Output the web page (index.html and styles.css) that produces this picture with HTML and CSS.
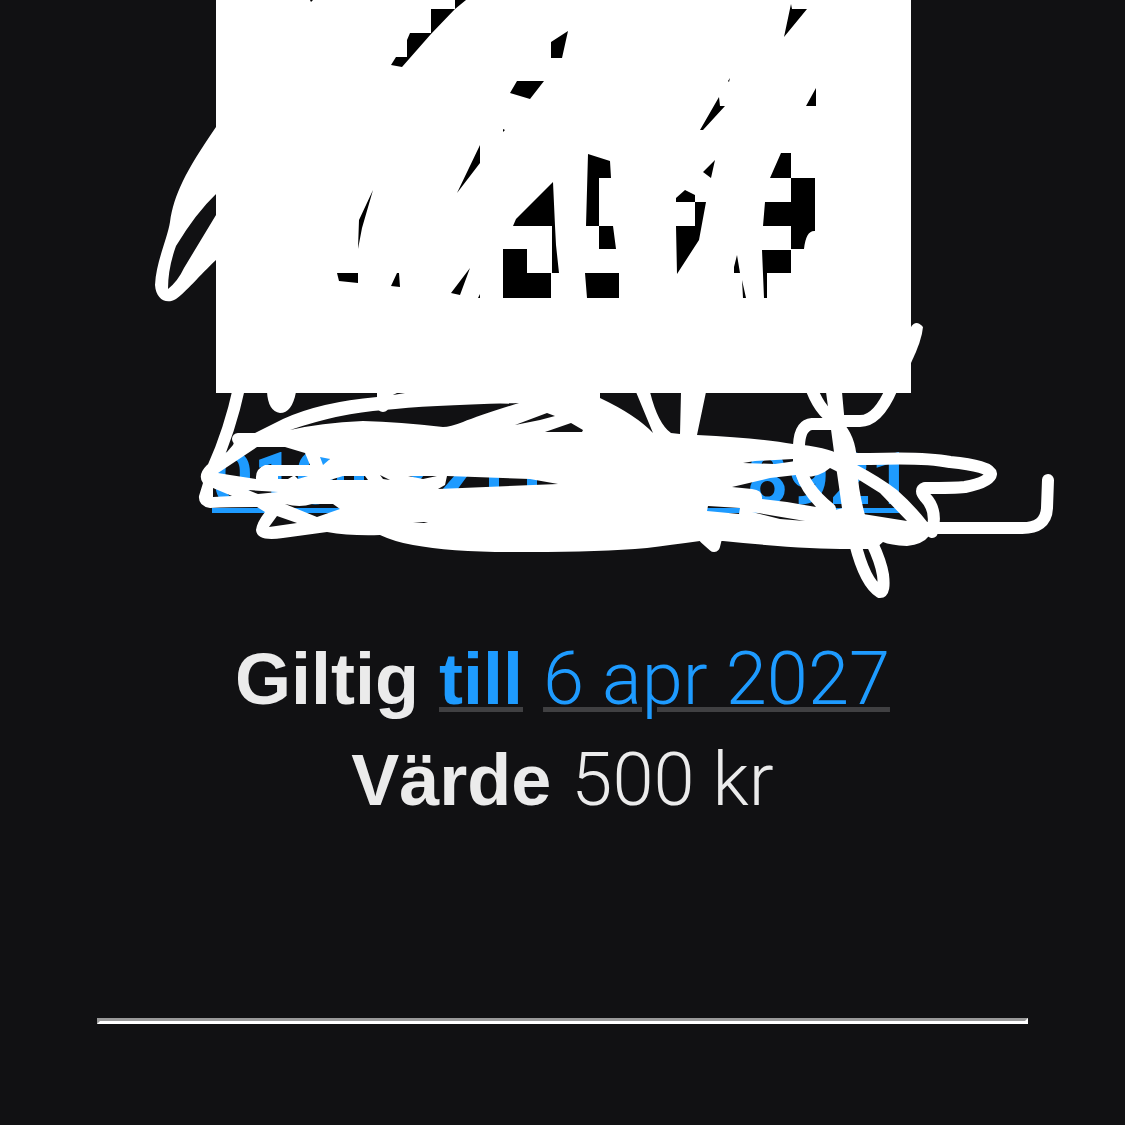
FILE: index.html
```
<!DOCTYPE html>
<html lang="sv">
<head>
    <meta charset="UTF-8">
    <meta name="viewport" content="width=device-width, initial-scale=1.0">
    <title>Presentkort</title>
    <link rel="stylesheet" href="styles.css">
</head>
<body>
    <main class="voucher">
        <div class="code-panel">
            <svg class="code" viewBox="216 0 695 393" aria-hidden="true">
                <path d="M455 0V9H431V33H410L407 40V57H396L391 65L402 67L431 34L455 9L466 0Z"/>
                <path d="M480 145V163L457 193ZM373 190L359 220L358 249L362 228ZM337 273H358V283L339 281ZM397 273H399L400 287L391 286ZM470 268L460 295L451 293ZM480 294V298H478ZM310 0H313L311 2Z"/>
                <path d="M568 31L551 42V58H562ZM517 81H544L530 99L510 93ZM791 4L792 9H807L784 37ZM719 97L720 106H725L703 130H700ZM816 88V106H806ZM730 78L729 82L728 81ZM503 129L505 130L503 132Z"/>
                <path d="M588 154L610 161L611 178H599V226H586ZM599 226H613L616 249H599Z"/>
                <path d="M553 182L555 226L556 245L559 273H552V226H513L516 219ZM503 249H527V273H551V298H503ZM585 273H619V298H587Z"/>
                <path d="M715 160L711 178L703 172ZM676 198L685 190L695 195V202H676ZM695 202H706L699 240L677 274L676 226H695Z"/>
                <path d="M781 153H791V178H815V231Q806 230 804 249H791V273H767V298H764L762 250H791V226H763L765 202H791V178H770ZM737 255L740 273H734V267ZM742 280L746 298H743Z"/>
            </svg>
        </div>

        <a class="number" href="#"><span>010</span><span>8921</span></a>

        <p class="row"><strong>Giltig</strong> <a href="#"><strong>till</strong></a> <a class="light" href="#">6 apr 2027</a></p>
        <p class="row"><strong>Värde</strong> <span class="light">500 kr</span></p>
        <hr>

        <svg class="scribble" viewBox="0 0 1125 620" aria-hidden="true">
            <!-- bits of digits in the middle of the number -->
            <path class="ink" d="M455 475H468L457 490H442ZM489 475H499V490H489ZM527 475H537V490H527ZM338 475H344V482H336ZM354 475H364V482H354ZM408 475H424L420 480Z"/>

            <path class="fill" d="M216 127C185 172 174 195 170 222C167 240 156 262 155 285C156 299 166 305 176 299C185 293 200 275 216 260ZM216 194Q196 213 176 246Q168 268 168 289Q178 281 184 268L216 215Z"/>
            <path class="fill" d="M911 327Q916 319 923 327Q922 340 911 363Z"/>
            <path class="fill" d="M267 392H296Q292 413 280 413Q268 411 267 392Z"/>

            <path class="fill" d="M238 433H255L283 419Q320 402 377 397V392H600V398Q636 415 653 433L636 392H650Q658 424 671 433L680 434L681 392H706L697 435Q760 438 793 444Q828 447 840 455L857 465Q880 477 897 490Q914 505 928 523V537Q923 544 907 546Q890 545 883 542L875 549H850Q800 549 723 541L700 541Q670 545 647 548Q600 552 530 552Q455 553 413 545Q395 542 380 535Q350 536 327 532L283 538Q257 542 256 530Q257 522 265 512L257 507Q230 507 210 508Q198 506 199 496L203 483Q197 475 207 465L227 452L233 445Z
                M290 430Q340 413 384 410Q430 405 519 403Q480 415 463 422Q450 427 443 427Q400 422 363 421Q320 423 290 430Z
                M515 425L547 413L555 416L540 420ZM545 432L571 423L583 430L582 432ZM393 395L397 393H405Z
                M218 473L257 447H285L305 453L310 465H265Q255 469 256 479L230 475ZM213 488L232 496L213 497ZM285 504Q300 508 312 504H333L340 509L317 517ZM269 527L277 516L297 523ZM320 457L330 459L323 465ZM248 490L278 492L258 494ZM278 476H293L288 479H278ZM295 476H308L298 479ZM330 480L343 476H365L368 480ZM380 475L390 480L383 479ZM408 476H437L423 479ZM447 476L530 479L558 484L438 489L445 485ZM413 522L428 522L424 523Z
                M743 463L755 461L793 459L796 461L775 464ZM732 487L770 478L796 475Q800 490 816 507L787 502L762 499Q763 490 752 489ZM708 506L740 508L739 514L707 511ZM752 512L805 521L780 519Z
                M804 477Q820 477 830 468L838 472L843 508L835 510L813 493ZM856 478L880 493L907 521L863 514Z"/>

            <path class="fill" d="M826 392H842L845 425Q857 440 857 465Q858 490 865 515H843L834 452Z"/>
            <g class="pen">
                <path d="M239 388Q230 430 213 468M238 439H260"/>
                <path d="M835 424H812Q800 425 799 445V465Q804 488 830 509"/>
                <path d="M892 388Q878 421 860 421H838Q822 415 812 390"/>
                <path d="M835 459H870Q925 457 950 462Q990 466 991 474Q990 482 965 487Q955 488 925 488Q919 490 925 497Q938 510 932 532"/>
                <path d="M925 528H1020Q1046 529 1047 508L1048 480"/>
                <path d="M855 543Q865 583 880 592Q885 592 883 575Q881 562 872 543"/>
                <path d="M705 538L714 546L716 538M383 400V406"/>
            </g>
        </svg>
    </main>
</body>
</html>
```

FILE: styles.css
```
body {
    margin: 0;
    background-color: #111113;
    color: #ebebeb;
    font-family: "Liberation Sans", Arial, sans-serif;
    font-size: 72px;
    line-height: 101px;
    text-align: center;
}
.voucher {
    position: relative;
}
.code-panel {
    margin: 0 214px 36px 216px;
    background-color: #fff;
}
.code {
    display: block;
    width: 100%;
    fill: #000;
}
a {
    color: #1e9bff;
    text-decoration: underline;
    text-decoration-color: #404042;
    text-decoration-thickness: 5px;
    text-underline-offset: 3px;
}
.light {
    font-family: Roboto, sans-serif;
    font-size: 74px;
    font-weight: 300;
}
.number {
    display: flex;
    justify-content: space-between;
    height: 79px;
    margin: 0 213px 0 212px;
    border-bottom: 5px solid #1e9bff;
    font-family: Roboto, sans-serif;
    font-weight: bold;
    text-decoration: none;
}
.row {
    height: 101px;
    margin: 0;
}
.number + .row {
    margin-top: 115px;
}
hr {
    margin: 188px 97px 0;
    border: 3px solid;
    border-color: #999 #fff #fff #999;
}
.scribble {
    position: absolute;
    top: 0;
    left: 0;
    width: 100%;
    pointer-events: none;
}
.fill {
    fill: #fff;
    fill-rule: evenodd;
}
.ink {
    fill: #1e9bff;
}
.pen {
    fill: none;
    stroke: #fff;
    stroke-width: 12px;
    stroke-linecap: round;
    stroke-linejoin: round;
}
```
